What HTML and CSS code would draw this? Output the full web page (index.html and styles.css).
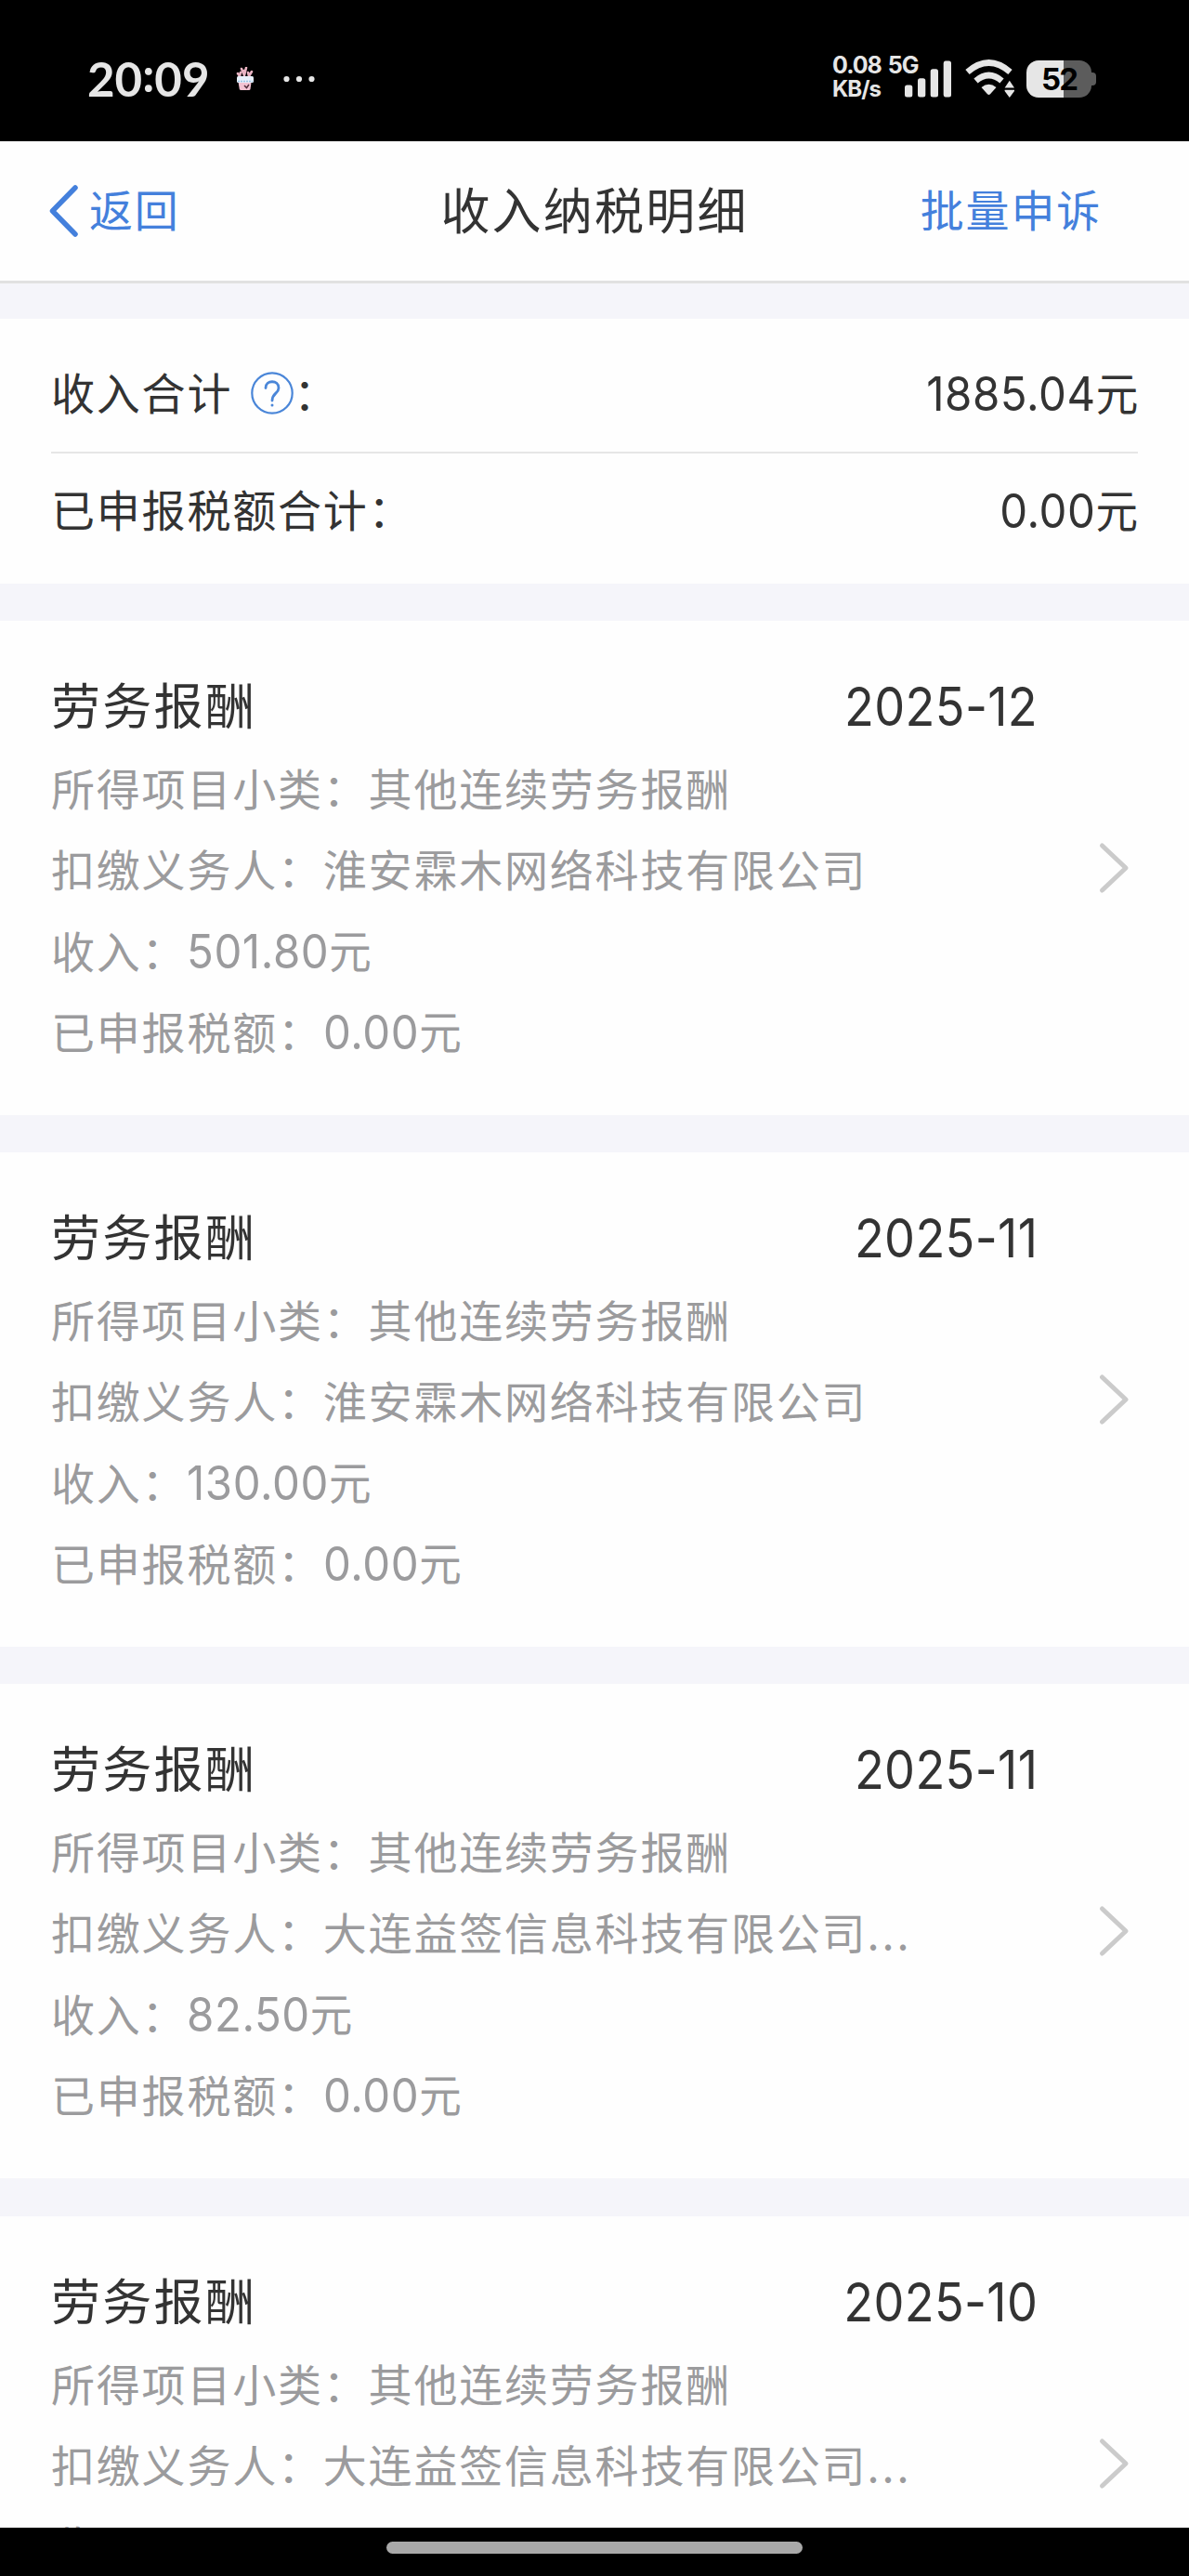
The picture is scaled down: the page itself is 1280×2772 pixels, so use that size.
FILE: index.html
```html
<!DOCTYPE html>
<html lang="zh-CN">
<head>
  <meta charset="UTF-8" />
  <meta name="viewport" content="width=device-width, initial-scale=1.0"/>
  <title>收入纳税明细</title>
  <link rel="stylesheet" href="styles.css">
</head>
<body>

<div class="phone">
  <!-- 状态栏 -->
  <div class="status">
    <div class="clock">20<span class="colon">:</span>09</div>
    <svg class="pot" width="20" height="26" viewBox="0 0 20 26">
      <path d="M4 10L2 7M4 10L5 6M9 9L6 2M9 9L11 1M9 9V4M14 10L13 6M14 10L17 5" stroke="#eab4c3" stroke-width="2.6" stroke-linecap="round"/>
      <path d="M2 13H17L15.500 24Q15.300 25 14 25H5.500Q4 25 3.800 24Z" fill="#f3c3d3"/>
      <rect x="1" y="10" width="18" height="7" rx="1.500" fill="#e9f1fb"/>
      <path d="M2 15.500H18" stroke="#9cc3e6" stroke-width="1.500" stroke-dasharray="2 1"/>
      <path d="M9 20L11.500 22.500L14 19" stroke="#55303f" stroke-width="1.500" fill="none"/>
    </svg>
    <svg class="dots" width="34" height="8" viewBox="0 0 34 8" fill="#e6e6e6">
      <circle cx="3.500" cy="4" r="3.100"/><circle cx="17" cy="4" r="3.100"/><circle cx="30.500" cy="4" r="3.100"/>
    </svg>
    <div class="speed">
      <div>0.08 5G</div>
      <div class="unit">KB/s</div>
    </div>
    <svg class="signal" width="50" height="40" viewBox="0 0 50 40" fill="#e6e6e6">
      <rect x="0" y="26.500" width="8.300" height="13" rx="2.500"/>
      <rect x="14" y="19.300" width="8.300" height="20.200" rx="2.500"/>
      <rect x="27.700" y="9.300" width="8.300" height="30.200" rx="2.500"/>
      <rect x="41.700" y="0.500" width="8.300" height="39" rx="2.500"/>
    </svg>
    <svg class="wifi" width="56" height="42" viewBox="0 0 56 42">
      <path d="M3.500 13.500Q26.500 -6.500 49.500 13.500" stroke="#e6e6e6" stroke-width="6.600" fill="none"/>
      <path d="M12.500 23Q26.500 11 40.500 23" stroke="#e6e6e6" stroke-width="6.600" fill="none"/>
      <path d="M18.500 30Q26.500 23.500 34.500 30L28 37.200Q26.500 38.600 25 37.200Z" fill="#e6e6e6"/>
      <path d="M49 21L57 31V42H41V31Z" fill="#000"/>
      <path d="M48.800 22.800L54 30.500H43.600ZM43.600 32.800H54V34L48.800 41L43.600 34Z" fill="#e6e6e6"/>
    </svg>
    <div class="battery"><span class="level">52</span></div>
  </div>

  <!-- 导航 -->
  <div class="nav">
    <div class="back">
      <svg width="34" height="58" viewBox="0 0 34 58">
        <path d="M30 4L5.500 29L30 54" stroke="#4480dc" stroke-width="5.500" stroke-linecap="round" stroke-linejoin="round" fill="none"/>
      </svg>
      <span class="back-text">返回</span>
    </div>
    <div class="title">收入纳税明细</div>
    <div class="action">批量申诉</div>
  </div>

  <!-- 合计 -->
  <div class="summary">
    <div class="sum-row">
      <div class="label">收入合计
        <svg class="help" width="46" height="46" viewBox="0 0 46 46" fill="none" stroke="#4a86d8">
          <circle cx="23" cy="23" r="21.700" stroke-width="2.200"/>
          <path d="M16 17.500C16 8.500 30 8.500 30 17.500C30 23.500 23 23 23 31" stroke-width="2.800" stroke-linecap="round"/>
          <circle cx="23" cy="36" r="0.700" stroke-width="1.600"/>
        </svg>
        <span>：</span>
      </div>
      <div class="amount"><span class="num">1885.04</span>元</div>
    </div>
    <div class="sum-row">
      <div class="label">已申报税额合计：</div>
      <div class="amount"><span class="num">0.00</span>元</div>
    </div>
  </div>

  <!-- 明细列表 -->
  <div class="list">
    <div class="card">
      <div class="head"><span>劳务报酬</span><span class="date">2025-12</span></div>
      <div class="line">所得项目小类：其他连续劳务报酬</div>
      <div class="line">扣缴义务人：淮安霖木网络科技有限公司</div>
      <div class="line">收入：<span class="value"><span class="num">501.80</span>元</span></div>
      <div class="line">已申报税额：<span class="value"><span class="num">0.00</span>元</span></div>
      <svg class="arrow" width="34" height="58" viewBox="0 0 34 58"><path d="M4.500 5L30 29L4.500 53"/></svg>
    </div>
    <div class="card">
      <div class="head"><span>劳务报酬</span><span class="date">2025-11</span></div>
      <div class="line">所得项目小类：其他连续劳务报酬</div>
      <div class="line">扣缴义务人：淮安霖木网络科技有限公司</div>
      <div class="line">收入：<span class="value"><span class="num">130.00</span>元</span></div>
      <div class="line">已申报税额：<span class="value"><span class="num">0.00</span>元</span></div>
      <svg class="arrow" width="34" height="58" viewBox="0 0 34 58"><path d="M4.500 5L30 29L4.500 53"/></svg>
    </div>
    <div class="card">
      <div class="head"><span>劳务报酬</span><span class="date">2025-11</span></div>
      <div class="line">所得项目小类：其他连续劳务报酬</div>
      <div class="line">扣缴义务人：大连益签信息科技有限公司<span class="more">...</span></div>
      <div class="line">收入：<span class="value"><span class="num">82.50</span>元</span></div>
      <div class="line">已申报税额：<span class="value"><span class="num">0.00</span>元</span></div>
      <svg class="arrow" width="34" height="58" viewBox="0 0 34 58"><path d="M4.500 5L30 29L4.500 53"/></svg>
    </div>
    <div class="card">
      <div class="head"><span>劳务报酬</span><span class="date">2025-10</span></div>
      <div class="line">所得项目小类：其他连续劳务报酬</div>
      <div class="line">扣缴义务人：大连益签信息科技有限公司<span class="more">...</span></div>
      <div class="line">收入：</div>
      <svg class="arrow" width="34" height="58" viewBox="0 0 34 58"><path d="M4.500 5L30 29L4.500 53"/></svg>
    </div>
  </div>

  <div class="home"><div class="home-bar"></div></div>
</div>

</body>
</html>
```
FILE: styles.css
```css
* {
  box-sizing: border-box;
}
body {
  margin: 0;
  background: #f5f5fa;
  font-family: "Noto Sans CJK SC", sans-serif;
  font-size: 47px;
  letter-spacing: 1.8px;
  color: #333;
}
svg {
  display: block;
  flex: none;
}
.phone {
  width: 1280px;
  height: 2772px;
  display: flex;
  flex-direction: column;
  overflow: hidden;
}

/* 状态栏 */
.status {
  height: 152px;
  flex: none;
  background: #000;
  color: #e6e6e6;
  display: flex;
  align-items: center;
  padding: 18px 105px 0 94px;
  letter-spacing: 0;
}
.clock {
  width: 160px;
  font: 700 51px/60px Lato, sans-serif;
}
.clock .colon {
  position: relative;
  top: -5px;
}
.dots {
  margin-left: 31px;
}
.speed {
  margin-left: auto;
  width: 78px;
  padding-bottom: 4px;
  white-space: nowrap;
  font: 700 25px/26px Inter, sans-serif;
  letter-spacing: -1px;
  word-spacing: 2px;
}
.speed .unit {
  font-size: 24px;
}
.wifi {
  margin-left: 14px;
}
.battery {
  position: relative;
  width: 70px;
  height: 40px;
  margin-left: 11px;
  border-radius: 13px;
  background: linear-gradient(to right, #e6e6e6 40px, #5c5c5c 40px);
  display: flex;
  align-items: center;
  justify-content: center;
}
.battery::after {
  content: "";
  position: absolute;
  left: 69px;
  top: 13px;
  width: 6px;
  height: 14px;
  border-radius: 0 4px 4px 0;
  background: #5c5c5c;
}
.level {
  font: 700 33px/40px Inter, sans-serif;
  letter-spacing: -2px;
  color: #000;
}

/* 导航 */
.nav {
  height: 153px;
  flex: none;
  background: #fefefe;
  border-bottom: 3px solid #e1e1e1;
  display: grid;
  grid-template-columns: 1fr auto 1fr;
  align-items: center;
  padding: 0 94px 0 51px;
  color: #4480dc;
}
.back {
  display: flex;
  align-items: center;
  gap: 11px;
}
.back-text,
.title,
.action {
  padding-bottom: 7px;
}
.title {
  font-size: 53px;
  letter-spacing: 2.2px;
  color: #333;
  margin-left: 43px;
}
.action {
  text-align: right;
}

/* 合计 */
.summary {
  height: 285px;
  flex: none;
  margin: 38px 0 40px;
  padding: 19px 55px 0;
  background: #fefefe;
}
.sum-row {
  height: 126px;
  display: flex;
  align-items: center;
  justify-content: space-between;
  padding-bottom: 8px;
}
.sum-row:first-child {
  border-bottom: 2px solid #e6e6e6;
}
.sum-row:last-child {
  padding-bottom: 10px;
}
.label {
  display: flex;
  align-items: center;
}
.help {
  margin: 6px 0 0 20px;
}
.num {
  font-family: Inter, sans-serif;
  font-size: 51px;
  letter-spacing: 0.6px;
}
.amount,
.value {
  display: inline-block;
  font-size: 49px;
  letter-spacing: 0;
  transform: scaleX(0.93);
  transform-origin: right;
}
.value {
  transform-origin: left;
}

/* 明细列表 */
.list {
  flex: 1;
  min-height: 0;
  overflow: hidden;
}
.card {
  position: relative;
  height: 531.5px;
  margin-bottom: 40.7px;
  padding: 44px 55px 0;
  background: #fefefe;
}
.head {
  height: 91px;
  line-height: 91px;
  display: flex;
  justify-content: space-between;
  font-size: 53px;
  letter-spacing: 2.3px;
}
.date {
  margin-right: 108px;
  padding-top: 3px;
  font-family: Inter, sans-serif;
  font-size: 58px;
  letter-spacing: 0.4px;
  transform: scaleX(0.9);
  transform-origin: right;
}
.line {
  height: 87px;
  line-height: 87px;
  color: #9b9b9d;
  white-space: nowrap;
}
.more {
  letter-spacing: 3px;
}
.arrow {
  position: absolute;
  right: 64px;
  top: 237px;
  fill: none;
  stroke: #cbcbcb;
  stroke-width: 5px;
  stroke-linecap: round;
  stroke-linejoin: round;
}

/* 底部手势条 */
.home {
  height: 52px;
  flex: none;
  background: #000;
  padding-top: 15px;
}
.home-bar {
  width: 448px;
  height: 13px;
  margin: 0 auto;
  border-radius: 7px;
  background: #a9a9a9;
}
```
